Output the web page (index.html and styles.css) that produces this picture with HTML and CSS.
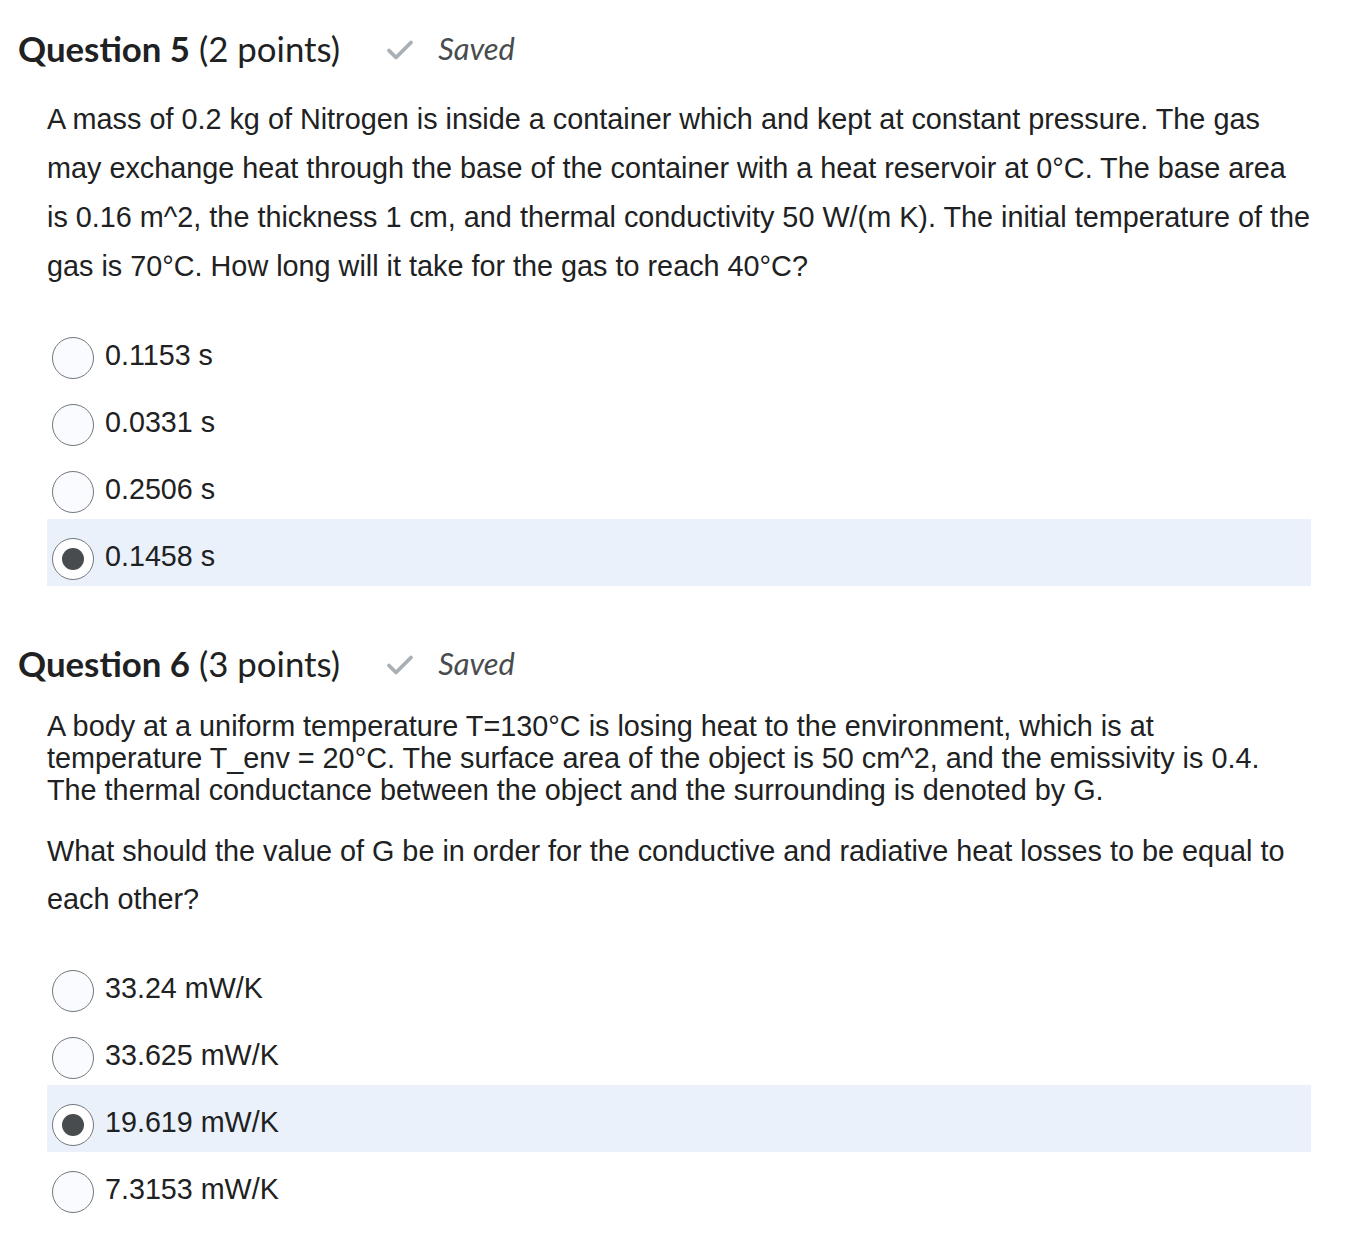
FILE: index.html
```html
<!DOCTYPE html>
<html>
<head>
<meta charset="utf-8">
<link rel="stylesheet" href="styles.css">
</head>
<body>
<div class="page">
  <section class="question q5">
    <h2 class="qhead">
      <span class="qtitle"><strong>Question 5</strong> (2 points)</span>
      <span class="saved">
        <svg class="check" width="28" height="24" viewBox="0 0 28 24"><path d="M3 12.5 L10 19.5 L25 4.5" fill="none" stroke="#a9b0b5" stroke-width="3.8" stroke-linecap="round" stroke-linejoin="round"/></svg>
        <em>Saved</em>
      </span>
    </h2>
    <p class="text loose">A mass of 0.2 kg of Nitrogen is inside a container which and kept at constant pressure. The gas may exchange heat through the base of the container with a heat reservoir at 0°C. The base area is 0.16 m^2, the thickness 1 cm, and thermal conductivity 50 W/(m K). The initial temperature of the gas is 70°C. How long will it take for the gas to reach 40°C?</p>
    <div class="options">
      <div class="opt"><span class="radio"></span><span class="label">0.1153 s</span></div>
      <div class="opt"><span class="radio"></span><span class="label">0.0331 s</span></div>
      <div class="opt"><span class="radio"></span><span class="label">0.2506 s</span></div>
      <div class="opt selected"><span class="radio on"></span><span class="label">0.1458 s</span></div>
    </div>
  </section>

  <section class="question q6">
    <h2 class="qhead">
      <span class="qtitle"><strong>Question 6</strong> (3 points)</span>
      <span class="saved">
        <svg class="check" width="28" height="24" viewBox="0 0 28 24"><path d="M3 12.5 L10 19.5 L25 4.5" fill="none" stroke="#a9b0b5" stroke-width="3.8" stroke-linecap="round" stroke-linejoin="round"/></svg>
        <em>Saved</em>
      </span>
    </h2>
    <p class="text tight">A body at a uniform temperature T=130°C is losing heat to the environment, which is at<br>temperature T_env = 20°C. The surface area of the object is 50 cm^2, and the emissivity is 0.4.<br>The thermal conductance between the object and the surrounding is denoted by G.</p>
    <p class="text loose2">What should the value of G be in order for the conductive and radiative heat losses to be equal to each other?</p>
    <div class="options opts2">
      <div class="opt"><span class="radio"></span><span class="label">33.24 mW/K</span></div>
      <div class="opt"><span class="radio"></span><span class="label">33.625 mW/K</span></div>
      <div class="opt selected"><span class="radio on"></span><span class="label">19.619 mW/K</span></div>
      <div class="opt"><span class="radio"></span><span class="label">7.3153 mW/K</span></div>
    </div>
  </section>
</div>
</body>
</html>
```

FILE: styles.css
```css
html, body {
  margin: 0;
  padding: 0;
  background: #ffffff;
}
body {
  font-family: "Liberation Sans", Arial, sans-serif;
  color: #202122;
}
.page {
  padding: 29px 0 0 18px;
  width: 1320px;
}
.qhead {
  margin: 0;
  height: 40px;
  display: flex;
  align-items: center;
  font-family: Lato, "Liberation Sans", sans-serif;
  font-weight: 400;
  font-size: 34.8px;
  line-height: 40px;
  color: #202122;
}
.qhead strong {
  font-weight: 700;
}
.saved {
  display: flex;
  align-items: center;
  margin-left: 46px;
  color: #494c4e;
  font-size: 30.8px;
}
.saved .check {
  margin-right: 24px;
  margin-top: 2px;
}
.saved em {
  font-style: italic;
}
.text {
  margin: 0 0 0 29px;
  font-size: 28.8px;
  width: 1266px;
}
.loose {
  margin-top: 26px;
  line-height: 49px;
}
.tight {
  margin-top: 26px;
  line-height: 32px;
}
.loose2 {
  margin-top: 21px;
  line-height: 48px;
}
.options {
  margin: 27px 0 0 29px;
  width: 1264px;
}
.opts2 {
  margin-top: 28px;
}
.opt {
  height: 67px;
  box-sizing: border-box;
  padding: 19px 0 0 5px;
  display: flex;
  align-items: flex-start;
}
.opt.selected {
  background: #eaf1fb;
}
.radio {
  width: 42px;
  height: 42px;
  box-sizing: border-box;
  border: 1px solid #73787c;
  border-radius: 50%;
  background: #f9fbff;
  flex: none;
  display: flex;
  align-items: center;
  justify-content: center;
}
.radio.on {
  background: #ffffff;
}
.radio.on::after {
  content: "";
  width: 22px;
  height: 22px;
  border-radius: 50%;
  background: #494c4e;
}
.label {
  margin-left: 11px;
  font-size: 28.7px;
  line-height: 36px;
}
.q6 {
  margin-top: 58px;
}
```
